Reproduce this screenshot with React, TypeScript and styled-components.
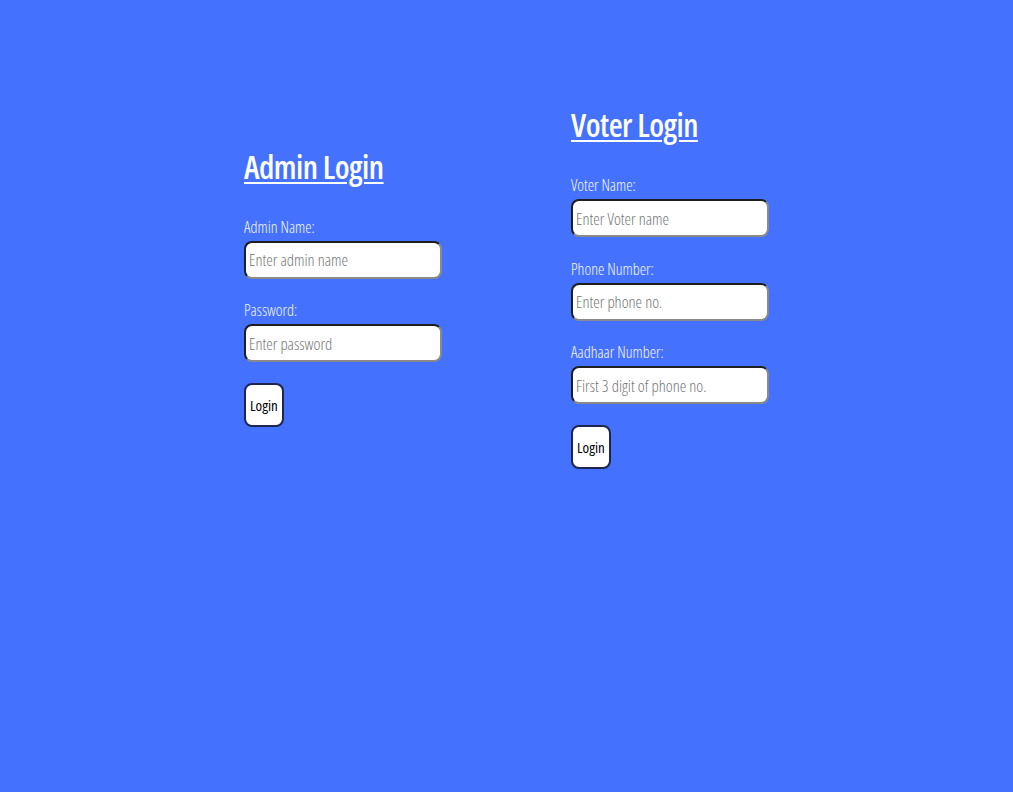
import styled, { createGlobalStyle } from 'styled-components';

const GlobalStyle = createGlobalStyle`
  html, body {
    margin: 0;
    padding: 0;
    min-height: 100%;
    background: #4472ff;
  }
  body {
    font-family: 'Open Sans', 'Noto Sans', sans-serif;
    font-stretch: 75%;
  }
`;

const Page = styled.main`
  display: flex;
  justify-content: center;
  align-items: center;
  gap: 129px;
  padding-top: 105px;
`;

const Panel = styled.form`
  display: flex;
  flex-direction: column;
  align-items: flex-start;
  width: 198px;
`;

const Title = styled.h1`
  margin: 0 0 30px;
  font-size: 32px;
  line-height: 40px;
  font-weight: 550;
  letter-spacing: -0.5px;
  color: #fff;
  text-decoration: underline;
  text-decoration-thickness: 2px;
  text-underline-offset: 3px;
  white-space: nowrap;
`;

const Field = styled.label`
  display: flex;
  flex-direction: column;
  width: 100%;
  margin-bottom: 21.5px;

  &:last-of-type {
    margin-bottom: 21px;
  }
`;

const LabelText = styled.span`
  font-size: 16px;
  line-height: 20px;
  font-weight: 350;
  color: #f4f6ff;
  margin-bottom: 4px;
`;

const Input = styled.input`
  box-sizing: border-box;
  width: 198px;
  height: 38px;
  padding: 0 3px;
  border-width: 2px;
  border-style: solid;
  border-color: #1e1e1e #8a8a8a #8a8a8a #1e1e1e;
  border-radius: 8px;
  background: #fff;
  font-family: inherit;
  font-stretch: 75%;
  font-size: 16.5px;
  font-weight: 350;
  color: #222;
  outline: none;

  &::placeholder {
    color: #767676;
  }
`;

const Button = styled.button`
  box-sizing: border-box;
  width: 40px;
  height: 44px;
  padding: 0;
  border: 2px solid #1d2550;
  border-radius: 8px;
  background: #fff;
  color: #000;
  font-family: inherit;
  font-stretch: 75%;
  font-size: 15px;
  font-weight: 400;
  cursor: pointer;
`;

type FieldDef = { label: string; placeholder: string; type?: string };

function LoginPanel({ title, fields }: { title: string; fields: FieldDef[] }) {
  return (
    <Panel onSubmit={(e) => e.preventDefault()}>
      <Title>{title}</Title>
      {fields.map((f) => (
        <Field key={f.label}>
          <LabelText>{f.label}</LabelText>
          <Input type={f.type || 'text'} placeholder={f.placeholder} />
        </Field>
      ))}
      <Button type='submit'>Login</Button>
    </Panel>
  );
}

export default function App() {
  return (
    <>
      <GlobalStyle />
      <Page>
        <LoginPanel
          title='Admin Login'
          fields={[
            { label: 'Admin Name:', placeholder: 'Enter admin name' },
            { label: 'Password:', placeholder: 'Enter password', type: 'password' },
          ]}
        />
        <LoginPanel
          title='Voter Login'
          fields={[
            { label: 'Voter Name:', placeholder: 'Enter Voter name' },
            { label: 'Phone Number:', placeholder: 'Enter phone no.' },
            { label: 'Aadhaar Number:', placeholder: 'First 3 digit of phone no.' },
          ]}
        />
      </Page>
    </>
  );
}
